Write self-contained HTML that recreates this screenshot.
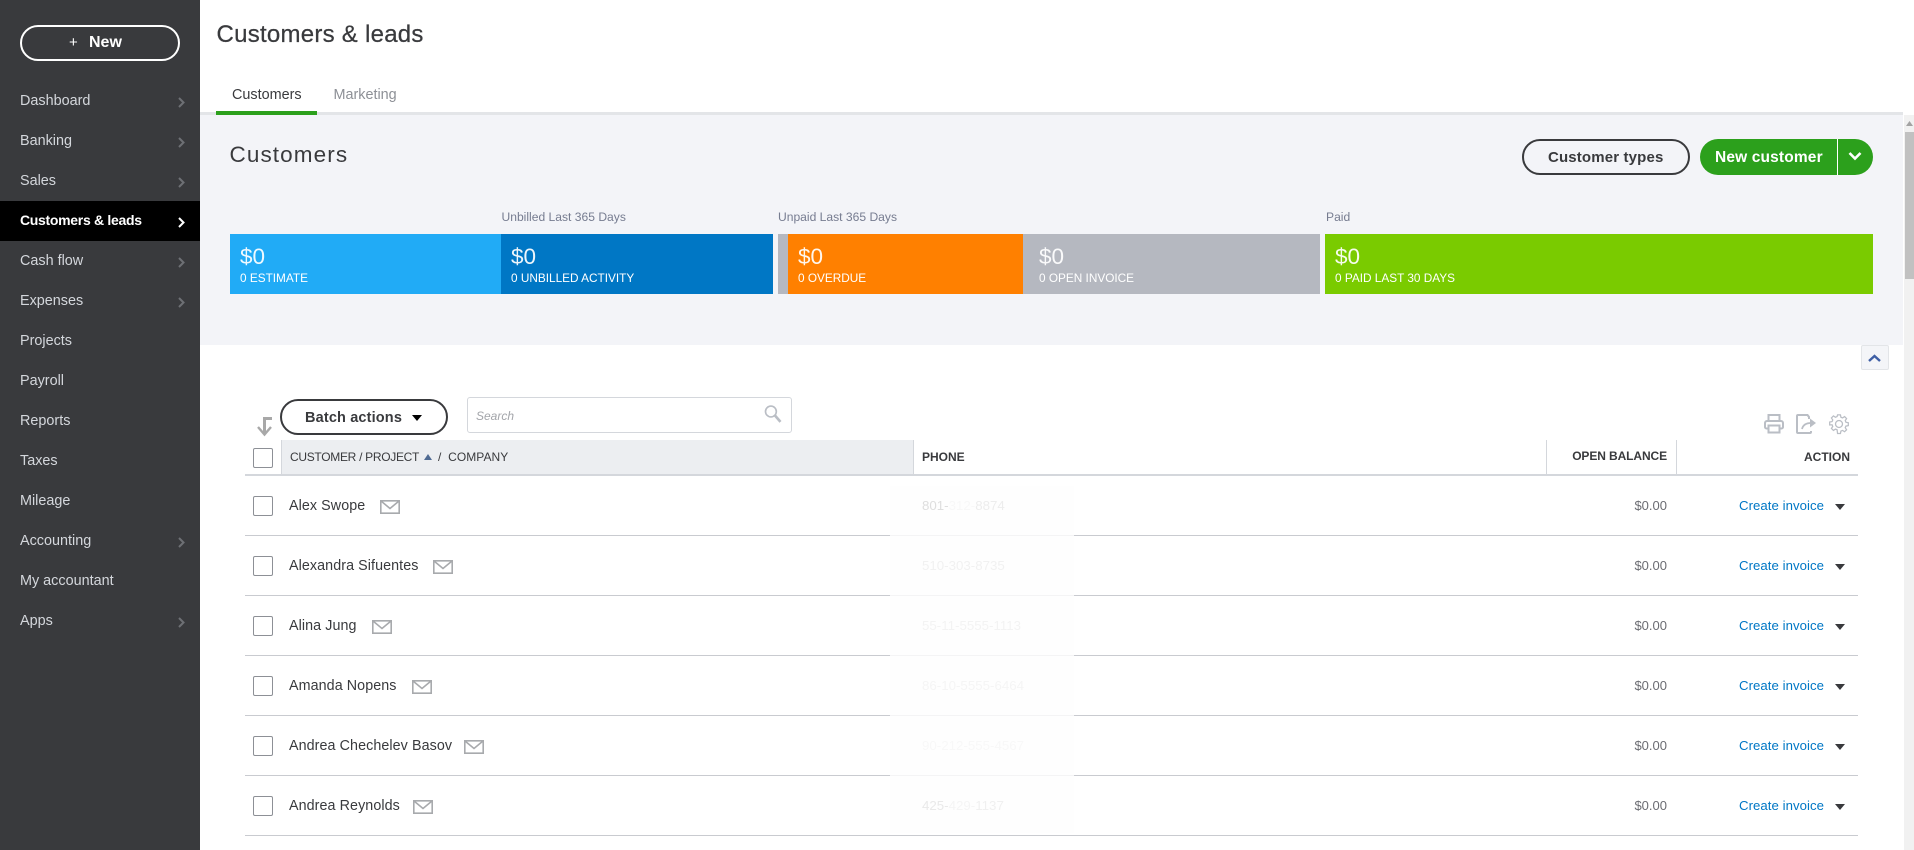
<!DOCTYPE html>
<html lang="en"><head><meta charset="utf-8"><title>Customers &amp; leads</title>
<style>
html,body{margin:0;padding:0;width:1914px;height:850px;overflow:hidden;background:#fff;font-family:"Liberation Sans",sans-serif;color:#393a3d}
.a{position:absolute;white-space:nowrap}
.t{position:absolute;white-space:nowrap;line-height:20px;height:20px}
#side{position:absolute;left:0;top:0;width:200px;height:850px;background:#393a3d}
.nav{position:absolute;left:20px;font-size:14.4px;line-height:20px;color:#d4d7dc;white-space:nowrap}
.chev{position:absolute;left:176px;width:10px;height:14px}
.bar{position:absolute;top:234px;height:60px}
.m{position:absolute;left:10px;top:10px;font-size:22.5px;line-height:26px;color:rgba(255,255,255,.93)}
.s{position:absolute;left:10px;top:36px;font-size:11.8px;line-height:16px;color:#fff;white-space:nowrap}
.lab{position:absolute;top:208px;font-size:12.1px;line-height:18px;color:#767c90;white-space:nowrap}
.cb{position:absolute;left:253px;width:18px;height:18px;border:1px solid #8d9096;border-radius:2px;background:#fff}
.name{position:absolute;left:289px;font-size:14.3px;line-height:20px;color:#393a3d;white-space:nowrap;letter-spacing:.08px}
.line{position:absolute;left:245px;width:1613px;height:1px;background:#c9cbd0}
.bal{position:absolute;left:1567px;width:100px;text-align:right;font-size:13px;line-height:20px;color:#6b6c72}
.ci{position:absolute;left:1739px;font-size:13.2px;line-height:20px;color:#0077c5;white-space:nowrap;letter-spacing:.05px}
.car{position:absolute;left:1835px;width:0;height:0;border-left:5px solid transparent;border-right:5px solid transparent;border-top:6px solid #393a3d}
.ph{position:absolute;left:922px;font-size:13.3px;line-height:20px;white-space:nowrap}
.th{position:absolute;font-size:12px;font-weight:bold;line-height:16px;color:#393a3d;white-space:nowrap}
svg{position:absolute;overflow:visible}
</style></head><body>

<div id="side"></div>
<div class="a" style="left:20px;top:25px;width:156px;height:32px;border:2px solid #fff;border-radius:18px"></div>
<div class="t" style="left:69px;top:33px;font-size:15px;color:#fff">+</div>
<div class="t" style="left:89px;top:33px;font-size:16px;font-weight:bold;color:#fff">New</div>

<div class="a" style="left:0;top:201px;width:200px;height:40px;background:#000"></div>
<div class="nav" style="top:91px">Dashboard</div>
<div class="nav" style="top:131px">Banking</div>
<div class="nav" style="top:171px">Sales</div>
<div class="nav" style="top:210px;color:#fff;font-weight:bold;font-size:14px;letter-spacing:-.3px">Customers &amp; leads</div>
<div class="nav" style="top:251px">Cash flow</div>
<div class="nav" style="top:291px">Expenses</div>
<div class="nav" style="top:331px">Projects</div>
<div class="nav" style="top:371px">Payroll</div>
<div class="nav" style="top:411px">Reports</div>
<div class="nav" style="top:451px">Taxes</div>
<div class="nav" style="top:491px">Mileage</div>
<div class="nav" style="top:531px">Accounting</div>
<div class="nav" style="top:571px">My accountant</div>
<div class="nav" style="top:611px">Apps</div>

<svg class="chev" style="top:95px" viewBox="0 0 10 14"><path d="M3 3l4.500 4.500L3 12" fill="none" stroke="#6e7075" stroke-width="2"/></svg>
<svg class="chev" style="top:135px" viewBox="0 0 10 14"><path d="M3 3l4.500 4.500L3 12" fill="none" stroke="#6e7075" stroke-width="2"/></svg>
<svg class="chev" style="top:175px" viewBox="0 0 10 14"><path d="M3 3l4.500 4.500L3 12" fill="none" stroke="#6e7075" stroke-width="2"/></svg>
<svg class="chev" style="top:215px" viewBox="0 0 10 14"><path d="M3 3l4.500 4.500L3 12" fill="none" stroke="#fff" stroke-width="2"/></svg>
<svg class="chev" style="top:255px" viewBox="0 0 10 14"><path d="M3 3l4.500 4.500L3 12" fill="none" stroke="#6e7075" stroke-width="2"/></svg>
<svg class="chev" style="top:295px" viewBox="0 0 10 14"><path d="M3 3l4.500 4.500L3 12" fill="none" stroke="#6e7075" stroke-width="2"/></svg>
<svg class="chev" style="top:535px" viewBox="0 0 10 14"><path d="M3 3l4.500 4.500L3 12" fill="none" stroke="#6e7075" stroke-width="2"/></svg>
<svg class="chev" style="top:615px" viewBox="0 0 10 14"><path d="M3 3l4.500 4.500L3 12" fill="none" stroke="#6e7075" stroke-width="2"/></svg>

<div class="a" style="left:216.500px;top:20px;font-size:24px;line-height:30px;color:#393a3d;letter-spacing:.26px;-webkit-text-stroke:.25px #393a3d">Customers &amp; leads</div>
<div class="t" style="left:232px;top:85px;font-size:14.4px;color:#393a3d">Customers</div>
<div class="t" style="left:333.500px;top:85px;font-size:14.4px;color:#8d9096">Marketing</div>

<div class="a" style="left:200px;top:115px;width:1703px;height:230px;background:#f3f4f8"></div>
<div class="a" style="left:200px;top:112px;width:1703px;height:3px;background:#e3e5e8"></div>
<div class="a" style="left:216px;top:111px;width:101px;height:4px;background:#2ca01c"></div>

<div class="a" style="left:1904px;top:115px;width:10px;height:735px;background:#f1f1f1"></div>
<div class="a" style="left:1905px;top:132px;width:9px;height:147px;background:#c1c1c1"></div>
<svg style="left:1906px;top:121px" width="7" height="5"><path d="M3.500 0L7 5H0z" fill="#a3a3a3"/></svg>

<div class="a" style="left:229.500px;top:141px;font-size:22.5px;line-height:28px;color:#393a3d;letter-spacing:1.1px">Customers</div>

<div class="a" style="left:1522px;top:139px;width:164px;height:32px;border:2px solid #393a3d;border-radius:18px"></div>
<div class="t" style="left:1548px;top:148px;font-size:15px;font-weight:bold;color:#393a3d;letter-spacing:.15px">Customer types</div>
<div class="a" style="left:1700px;top:139px;width:173px;height:36px;border-radius:18px;background:#2ca01c"></div>
<div class="a" style="left:1837px;top:139px;width:1px;height:36px;background:#fff"></div>
<div class="t" style="left:1715px;top:148px;font-size:15.500px;font-weight:bold;color:#fff;letter-spacing:.15px">New customer</div>
<svg style="left:1848px;top:150px" width="14" height="12"><path d="M1.500 3l5.500 5.500L12.500 3" fill="none" stroke="#fff" stroke-width="2.600"/></svg>

<div class="lab" style="left:501.500px">Unbilled Last 365 Days</div>
<div class="lab" style="left:778px">Unpaid Last 365 Days</div>
<div class="lab" style="left:1326px">Paid</div>

<div class="bar" style="left:230px;width:271px;background:#21abf6"><div class="m">$0</div><div class="s">0 ESTIMATE</div></div>
<div class="bar" style="left:501px;width:272px;background:#0077c5"><div class="m">$0</div><div class="s">0 UNBILLED ACTIVITY</div></div>
<div class="bar" style="left:778px;width:10px;background:#b5b8c0"></div>
<div class="bar" style="left:788px;width:235px;background:#ff8000"><div class="m">$0</div><div class="s">0 OVERDUE</div></div>
<div class="bar" style="left:1023px;width:297px;background:#b5b8c0"><div class="m" style="left:16px">$0</div><div class="s" style="left:16px">0 OPEN INVOICE</div></div>
<div class="bar" style="left:1325px;width:548px;background:#7acb00"><div class="m">$0</div><div class="s">0 PAID LAST 30 DAYS</div></div>

<div class="a" style="left:1861px;top:345px;width:26px;height:23px;background:#f4f5f8;border:1px solid #e3e5e8;border-radius:2px"></div>
<svg style="left:1868px;top:354px" width="13" height="9"><path d="M1 7l5.500-5L12 7" fill="none" stroke="#3f5fa5" stroke-width="2.400"/></svg>

<svg style="left:257px;top:417px" width="16" height="19" viewBox="0 0 16 19"><path d="M15 1.500H7.500V16" fill="none" stroke="#a8a8a8" stroke-width="3"/><path d="M1 10l6.500 7.500L14 10" fill="none" stroke="#a8a8a8" stroke-width="2.400"/></svg>

<div class="a" style="left:280px;top:399px;width:164px;height:32px;border:2px solid #393a3d;border-radius:20px"></div>
<div class="t" style="left:305px;top:408px;font-size:14.500px;font-weight:bold;color:#393a3d;letter-spacing:.15px">Batch actions</div>
<div class="a" style="left:412px;top:415px;width:0;height:0;border-left:5px solid transparent;border-right:5px solid transparent;border-top:6px solid #000"></div>

<div class="a" style="left:467px;top:397px;width:323px;height:34px;border:1px solid #d4d7dc;border-radius:3px;background:#fff"></div>
<div class="t" style="left:476px;top:406px;font-size:12px;font-style:italic;color:#a3a5aa">Search</div>
<svg style="left:763px;top:404px" width="20" height="20" viewBox="0 0 22 24"><circle cx="8.500" cy="9" r="6.500" fill="none" stroke="#babec5" stroke-width="2"/><path d="M13.500 14l6.500 7.500" stroke="#babec5" stroke-width="3.200"/></svg>

<svg style="left:1764px;top:414px" width="20" height="20" viewBox="0 0 20 20" fill="none" stroke="#babec5" stroke-width="2"><path d="M4.500 7V1h11v6"/><path d="M4.500 14.500H2.500a1.500 1.500 0 0 1-1.500-1.500V9a2 2 0 0 1 2-2h14a2 2 0 0 1 2 2v4a1.500 1.500 0 0 1-1.500 1.500h-2"/><path d="M4.500 11.500h11v7h-11z"/></svg>
<svg style="left:1796px;top:414px" width="21" height="20" viewBox="0 0 21 20" fill="none" stroke="#babec5" stroke-width="2"><path d="M13 5V3l-1.500-2H2a1 1 0 0 0-1 1v16a1 1 0 0 0 1 1h12a1 1 0 0 0 1-1v-1"/><path d="M6 15c1-4 4-6 9-6" stroke-width="1.800"/><path d="M14 4.500L20 9l-6 4.500z" fill="#babec5" stroke="none"/></svg>
<svg style="left:1829px;top:414px" width="20" height="20" viewBox="0 0 20 20" fill="none" stroke="#babec5" stroke-width="1.300"><circle cx="10" cy="10" r="3.500"/><path d="M8.500 1h3l.5 2.500 1.700.7 2.100-1.400 2.100 2.100-1.400 2.100.7 1.700 2.500.5v3l-2.500.5-.7 1.700 1.400 2.100-2.100 2.100-2.100-1.400-1.700.7-.5 2.500h-3L8 16.500l-1.700-.7-2.100 1.400-2.100-2.100 1.400-2.100-.7-1.700L.3 11.500v-3l2.500-.5.7-1.700-1.400-2.100 2.100-2.100 2.100 1.400L8 2.800z" transform="translate(0.400 -0.100) scale(.96)"/></svg>

<div class="a" style="left:281px;top:440px;width:632px;height:34px;background:#eceef1"></div>
<div class="a" style="left:281px;top:440px;width:1px;height:34px;background:#d4d7dc"></div>
<div class="a" style="left:913px;top:440px;width:1px;height:34px;background:#d4d7dc"></div>
<div class="a" style="left:1546px;top:440px;width:1px;height:34px;background:#d4d7dc"></div>
<div class="a" style="left:1676px;top:440px;width:1px;height:34px;background:#d4d7dc"></div>
<div class="a" style="left:245px;top:474px;width:1613px;height:2px;background:#d4d7dc"></div>

<div class="cb" style="top:448px"></div>
<div class="th" style="left:290px;top:449px;font-weight:normal;letter-spacing:-.3px">CUSTOMER / PROJECT</div>
<svg style="left:424px;top:454px" width="8" height="6"><path d="M4 0l4 6H0z" fill="#4f6a92"/></svg>
<div class="th" style="left:438px;top:449px;font-weight:normal;letter-spacing:.05px">/&nbsp; COMPANY</div>
<div class="th" style="left:922px;top:449px">PHONE</div>
<div class="th" style="left:1567px;width:100px;text-align:right;top:448px;letter-spacing:-.1px">OPEN BALANCE</div>
<div class="th" style="left:1750px;width:100px;text-align:right;top:449px">ACTION</div>

<div class="line" style="top:535px"></div>
<div class="line" style="top:595px"></div>
<div class="line" style="top:655px"></div>
<div class="line" style="top:715px"></div>
<div class="line" style="top:775px"></div>
<div class="line" style="top:835px"></div>

<div class="a" style="left:890px;top:486px;width:184px;height:347px;background:#fefefe"></div>
<div class="a" style="left:890px;top:535px;width:184px;height:1px;background:#f4f4f5"></div>
<div class="a" style="left:890px;top:595px;width:184px;height:1px;background:#f4f4f5"></div>
<div class="a" style="left:890px;top:655px;width:184px;height:1px;background:#f4f4f5"></div>
<div class="a" style="left:890px;top:715px;width:184px;height:1px;background:#f4f4f5"></div>
<div class="a" style="left:890px;top:775px;width:184px;height:1px;background:#f4f4f5"></div>

<div class="ph" style="top:496px;color:#dedede">801-<span style="color:#f8f8f8">312-</span><span style="color:#ededed">8874</span></div>
<div class="ph" style="top:556px;color:#f1f1f1">510-303-8735</div>
<div class="ph" style="top:616px;color:#f3f3f3">55-11-5555-1113</div>
<div class="ph" style="top:676px;color:#f5f5f5">86-10-5555-6464</div>
<div class="ph" style="top:736px;color:#f8f8f8">90-212-555-4567</div>
<div class="ph" style="top:796px;color:#e9e9e9">425-<span style="color:#f5f5f5">429-</span><span style="color:#f0f0f0">1137</span></div>

<div class="cb" style="top:496px"></div><div class="name" style="top:496px">Alex Swope</div>
<div class="cb" style="top:556px"></div><div class="name" style="top:556px">Alexandra Sifuentes</div>
<div class="cb" style="top:616px"></div><div class="name" style="top:616px">Alina Jung</div>
<div class="cb" style="top:676px"></div><div class="name" style="top:676px">Amanda Nopens</div>
<div class="cb" style="top:736px"></div><div class="name" style="top:736px">Andrea Chechelev Basov</div>
<div class="cb" style="top:796px"></div><div class="name" style="top:796px">Andrea Reynolds</div>

<svg style="left:380px;top:500px" width="20" height="14" viewBox="0 0 20 14" fill="none" stroke="#a8aaad" stroke-width="1.600"><path d="M.8.800h18.400v12.400H.8z"/><path d="M1 1l9 7.500L19 1"/></svg>
<svg style="left:433px;top:560px" width="20" height="14" viewBox="0 0 20 14" fill="none" stroke="#a8aaad" stroke-width="1.600"><path d="M.8.800h18.400v12.400H.8z"/><path d="M1 1l9 7.500L19 1"/></svg>
<svg style="left:372px;top:620px" width="20" height="14" viewBox="0 0 20 14" fill="none" stroke="#a8aaad" stroke-width="1.600"><path d="M.8.800h18.400v12.400H.8z"/><path d="M1 1l9 7.500L19 1"/></svg>
<svg style="left:412px;top:680px" width="20" height="14" viewBox="0 0 20 14" fill="none" stroke="#a8aaad" stroke-width="1.600"><path d="M.8.800h18.400v12.400H.8z"/><path d="M1 1l9 7.500L19 1"/></svg>
<svg style="left:464px;top:740px" width="20" height="14" viewBox="0 0 20 14" fill="none" stroke="#a8aaad" stroke-width="1.600"><path d="M.8.800h18.400v12.400H.8z"/><path d="M1 1l9 7.500L19 1"/></svg>
<svg style="left:413px;top:800px" width="20" height="14" viewBox="0 0 20 14" fill="none" stroke="#a8aaad" stroke-width="1.600"><path d="M.8.800h18.400v12.400H.8z"/><path d="M1 1l9 7.500L19 1"/></svg>

<div class="bal" style="top:496px">$0.00</div><div class="ci" style="top:496px">Create invoice</div><div class="car" style="top:504px"></div>
<div class="bal" style="top:556px">$0.00</div><div class="ci" style="top:556px">Create invoice</div><div class="car" style="top:564px"></div>
<div class="bal" style="top:616px">$0.00</div><div class="ci" style="top:616px">Create invoice</div><div class="car" style="top:624px"></div>
<div class="bal" style="top:676px">$0.00</div><div class="ci" style="top:676px">Create invoice</div><div class="car" style="top:684px"></div>
<div class="bal" style="top:736px">$0.00</div><div class="ci" style="top:736px">Create invoice</div><div class="car" style="top:744px"></div>
<div class="bal" style="top:796px">$0.00</div><div class="ci" style="top:796px">Create invoice</div><div class="car" style="top:804px"></div>

</body></html>
